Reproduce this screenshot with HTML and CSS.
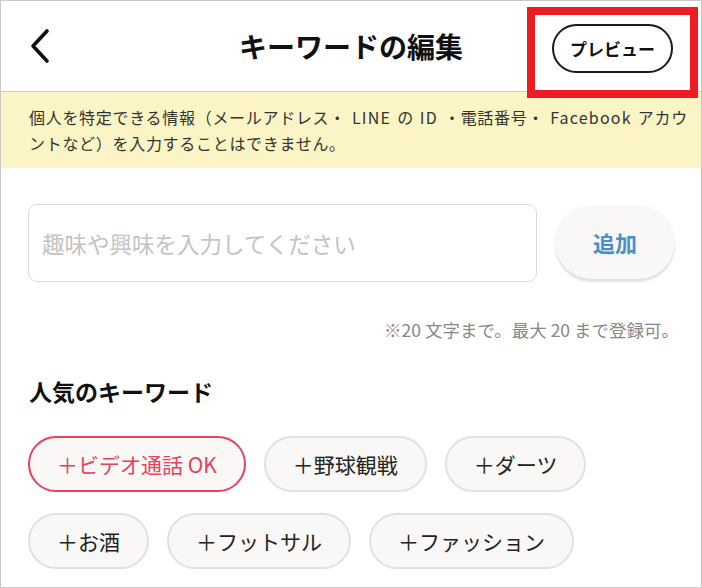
FILE: index.html
```html
<!DOCTYPE html>
<html lang="ja">
<head>
<meta charset="utf-8">
<title>キーワードの編集</title>
<link rel="stylesheet" href="styles.css">
</head>
<body>
<div class="frame">
  <header class="header">
    <button class="back" aria-label="戻る">
      <svg width="24" height="36" viewBox="0 0 24 36"><path d="M19 3 L5 18 L19 33" fill="none" stroke="#111" stroke-width="3.6" stroke-linecap="round" stroke-linejoin="round"/></svg>
    </button>
    <h1 class="title">キーワードの編集</h1>
    <button class="preview">プレビュー</button>
    <div class="highlight"></div>
  </header>
  <div class="notice">個人を特定できる情報（メールアドレス・<span class="latin">LINE</span>の<span class="latin">ID</span>・電話番号・<span class="latin">Facebook</span>アカウ<br>ントなど）を入力することはできません。</div>
  <main class="content">
    <div class="input-row">
      <div class="input">趣味や興味を入力してください</div>
      <button class="add">追加</button>
    </div>
    <p class="note">※20 文字まで。最大 20 まで登録可。</p>
    <h2 class="section-title">人気のキーワード</h2>
    <div class="chips">
      <span class="chip chip-active">＋ビデオ通話 OK</span>
      <span class="chip">＋野球観戦</span>
      <span class="chip">＋ダーツ</span>
      <span class="chip">＋お酒</span>
      <span class="chip">＋フットサル</span>
      <span class="chip">＋ファッション</span>
    </div>
  </main>
</div>
</body>
</html>
```

FILE: styles.css
```css
* { box-sizing: border-box; }
html, body { margin: 0; padding: 0; background: #fff; }
body {
  font-family: "Noto Sans CJK JP", "Noto Sans", sans-serif;
  color: #222;
}
.frame {
  position: relative;
  width: 702px;
  height: 588px;
  border: 1px solid #c9c9c9;
  overflow: hidden;
  background: #fff;
}
.header {
  height: 91px;
  border-bottom: 1px solid #cfcdc6;
  display: flex;
  align-items: center;
  padding: 0 28px 0 27px;
}
.back {
  border: 0;
  background: none;
  padding: 0;
  width: 24px;
  height: 36px;
  display: flex;
}
.title {
  flex: 1;
  margin: 0;
  text-align: center;
  font-size: 28px;
  font-weight: 700;
  color: #111;
  padding-left: 98px;
  white-space: nowrap;
}
.preview {
  width: 121px;
  height: 49px;
  border: 2px solid #1a1a1a;
  border-radius: 25px;
  background: #fff;
  font-family: inherit;
  font-size: 17px;
  font-weight: 700;
  color: #111;
  padding: 0;
  margin-top: 4px;
}
.highlight {
  position: absolute;
  left: 526px;
  top: 6px;
  width: 171px;
  height: 91px;
  border: 8px solid #ed1c24;
}
.notice {
  background: #fbf5c6;
  height: 76px;
  padding: 12px 4px 12px 28px;
  font-size: 16px;
  line-height: 26px;
  letter-spacing: 0.7px;
  color: #333;
  white-space: nowrap;
}
.latin {
  margin: 0 6px;
  letter-spacing: 1.2px;
}
.content {
  padding: 36px 26px 0 27px;
}
.input-row {
  display: flex;
  align-items: flex-start;
  gap: 18px;
}
.input {
  flex: 1;
  height: 78px;
  border: 1px solid #dcdcdc;
  border-radius: 9px;
  display: flex;
  align-items: center;
  padding: 0 13px 0 13px;
  font-size: 22.5px;
  color: #c3c3c3;
}
.add {
  width: 120px;
  height: 74px;
  margin-top: 1px;
  border: 0;
  border-radius: 37px;
  background: #f9f8f6;
  box-shadow: 0 3px 2px rgba(0, 0, 0, 0.12);
  font-family: inherit;
  font-size: 22px;
  font-weight: 700;
  color: #4a8fca;
  padding: 0;
}
.note {
  margin: 36px -4px 0 0;
  text-align: right;
  font-size: 17.5px;
  line-height: 24px;
  color: #888;
}
.section-title {
  margin: 34px 0 0 1px;
  font-size: 23px;
  line-height: 30px;
  font-weight: 700;
  color: #111;
}
.chips {
  margin-top: 30px;
  display: flex;
  flex-wrap: wrap;
  column-gap: 18px;
  row-gap: 21px;
  width: 580px;
}
.chip {
  height: 56px;
  display: inline-flex;
  align-items: center;
  padding: 0 27px;
  border: 2px solid #e2e1de;
  border-radius: 28px;
  background: #f9f8f6;
  font-size: 21px;
  color: #222;
  white-space: nowrap;
}
.chip-active {
  border-color: #e8415a;
  color: #e8415a;
}
```
